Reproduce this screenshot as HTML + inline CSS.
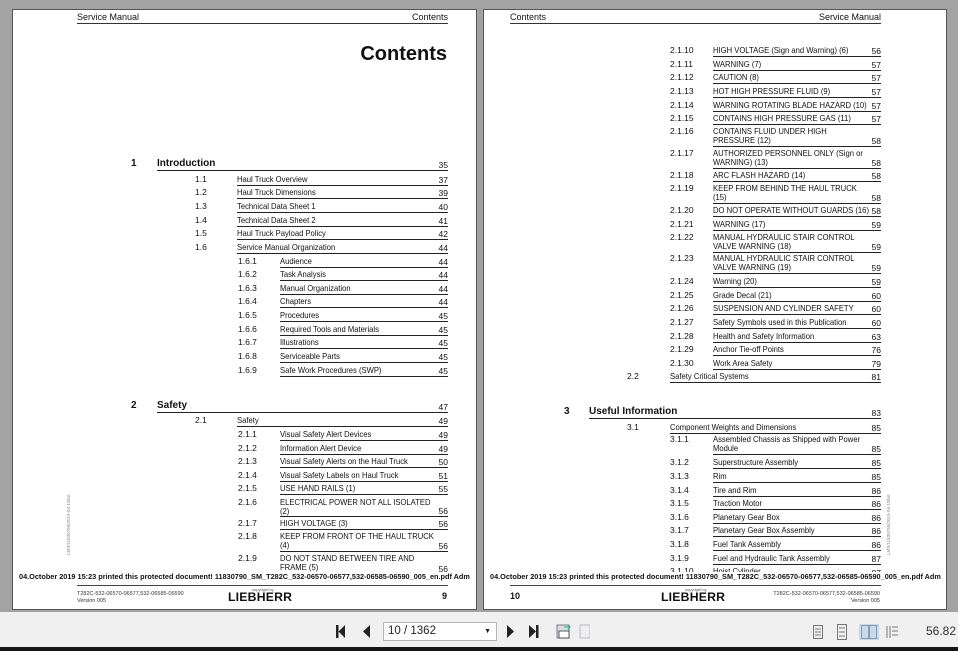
<!DOCTYPE html>
<html><head><meta charset="utf-8"><style>
*{margin:0;padding:0;box-sizing:border-box}
body{width:958px;height:651px;background:#a3a3a3;position:relative;overflow:hidden;font-family:"Liberation Sans",Arial,sans-serif;color:#111}
.pg{position:absolute;background:#fff;border:1px solid #555;top:9px;height:601px}
.a{position:absolute;white-space:nowrap}
.n{position:absolute;font-size:8.5px;line-height:9px;white-space:nowrap}
.e{position:absolute;border-bottom:1.3px solid #222;font-size:8.5px;line-height:9px;white-space:nowrap}
.e i{font-style:normal;display:inline-block;transform:scaleX(.9);transform-origin:left top}
.e b{position:absolute;right:0;bottom:0;font-weight:normal}
.h{position:absolute;border-bottom:1.3px solid #222;height:13px;font-size:10px;font-weight:bold;line-height:12px}
.h b{position:absolute;right:0;bottom:0;font-weight:normal;font-size:8.5px;line-height:9px}
.hn{position:absolute;font-size:10px;font-weight:bold}
.hd{position:absolute;top:12px;font-size:9px;border-bottom:1px solid #333;height:12px;line-height:10px}
.pl{position:absolute;top:572px;font-size:7.5px;font-weight:bold;white-space:nowrap;transform:scaleX(.975);transform-origin:left top;background:#fff}
.logo{position:absolute;font-weight:900;font-size:12px;letter-spacing:.2px;transform:scaleX(1.02);transform-origin:left top}
.cp{position:absolute;font-size:4px;color:#555}
.sm{position:absolute;font-size:5.5px;color:#333;line-height:7px;white-space:nowrap}
.vt{position:absolute;font-size:4.5px;color:#888;transform:rotate(-90deg);transform-origin:left top;white-space:nowrap}
</style></head><body>

<!-- LEFT PAGE -->
<div class="pg" style="left:12px;width:465px"></div>
<div class="hd" style="left:77px;width:371px"><span style="position:absolute;left:0">Service Manual</span><span style="position:absolute;right:0">Contents</span></div>
<div class="a" style="right:511px;top:43px;font-size:20px;font-weight:bold">Contents</div>

<div class="hn" style="left:131px;top:158px">1</div>
<div class="h" style="left:157px;width:291px;top:158px">Introduction<b>35</b></div>
<div class="n" style="left:195px;top:175px">1.1</div><div class="e" style="left:237px;width:211px;top:175px;height:11px"><i>Haul Truck Overview</i><b>37</b></div>
<div class="n" style="left:195px;top:188px">1.2</div><div class="e" style="left:237px;width:211px;top:188px;height:11px"><i>Haul Truck Dimensions</i><b>39</b></div>
<div class="n" style="left:195px;top:202px">1.3</div><div class="e" style="left:237px;width:211px;top:202px;height:11px"><i>Technical Data Sheet 1</i><b>40</b></div>
<div class="n" style="left:195px;top:216px">1.4</div><div class="e" style="left:237px;width:211px;top:216px;height:11px"><i>Technical Data Sheet 2</i><b>41</b></div>
<div class="n" style="left:195px;top:229px">1.5</div><div class="e" style="left:237px;width:211px;top:229px;height:11px"><i>Haul Truck Payload Policy</i><b>42</b></div>
<div class="n" style="left:195px;top:243px">1.6</div><div class="e" style="left:237px;width:211px;top:243px;height:11px"><i>Service Manual Organization</i><b>44</b></div>
<div class="n" style="left:238px;top:257px">1.6.1</div><div class="e" style="left:280px;width:168px;top:257px;height:11px"><i>Audience</i><b>44</b></div>
<div class="n" style="left:238px;top:270px">1.6.2</div><div class="e" style="left:280px;width:168px;top:270px;height:11px"><i>Task Analysis</i><b>44</b></div>
<div class="n" style="left:238px;top:284px">1.6.3</div><div class="e" style="left:280px;width:168px;top:284px;height:11px"><i>Manual Organization</i><b>44</b></div>
<div class="n" style="left:238px;top:297px">1.6.4</div><div class="e" style="left:280px;width:168px;top:297px;height:11px"><i>Chapters</i><b>44</b></div>
<div class="n" style="left:238px;top:311px">1.6.5</div><div class="e" style="left:280px;width:168px;top:311px;height:11px"><i>Procedures</i><b>45</b></div>
<div class="n" style="left:238px;top:325px">1.6.6</div><div class="e" style="left:280px;width:168px;top:325px;height:11px"><i>Required Tools and Materials</i><b>45</b></div>
<div class="n" style="left:238px;top:338px">1.6.7</div><div class="e" style="left:280px;width:168px;top:338px;height:11px"><i>Illustrations</i><b>45</b></div>
<div class="n" style="left:238px;top:352px">1.6.8</div><div class="e" style="left:280px;width:168px;top:352px;height:11px"><i>Serviceable Parts</i><b>45</b></div>
<div class="n" style="left:238px;top:366px">1.6.9</div><div class="e" style="left:280px;width:168px;top:366px;height:11px"><i>Safe Work Procedures (SWP)</i><b>45</b></div>

<div class="hn" style="left:131px;top:400px">2</div>
<div class="h" style="left:157px;width:291px;top:400px">Safety<b>47</b></div>
<div class="n" style="left:195px;top:416px">2.1</div><div class="e" style="left:237px;width:211px;top:416px;height:11px"><i>Safety</i><b>49</b></div>
<div class="n" style="left:238px;top:430px">2.1.1</div><div class="e" style="left:280px;width:168px;top:430px;height:11px"><i>Visual Safety Alert Devices</i><b>49</b></div>
<div class="n" style="left:238px;top:444px">2.1.2</div><div class="e" style="left:280px;width:168px;top:444px;height:11px"><i>Information Alert Device</i><b>49</b></div>
<div class="n" style="left:238px;top:457px">2.1.3</div><div class="e" style="left:280px;width:168px;top:457px;height:11px"><i>Visual Safety Alerts on the Haul Truck</i><b>50</b></div>
<div class="n" style="left:238px;top:471px">2.1.4</div><div class="e" style="left:280px;width:168px;top:471px;height:11px"><i>Visual Safety Labels on Haul Truck</i><b>51</b></div>
<div class="n" style="left:238px;top:484px">2.1.5</div><div class="e" style="left:280px;width:168px;top:484px;height:11px"><i>USE HAND RAILS (1)</i><b>55</b></div>
<div class="n" style="left:238px;top:498px">2.1.6</div><div class="e" style="left:280px;width:168px;top:498px;height:19px"><i>ELECTRICAL POWER NOT ALL ISOLATED<br>(2)</i><b>56</b></div>
<div class="n" style="left:238px;top:519px">2.1.7</div><div class="e" style="left:280px;width:168px;top:519px;height:11px"><i>HIGH VOLTAGE (3)</i><b>56</b></div>
<div class="n" style="left:238px;top:532px">2.1.8</div><div class="e" style="left:280px;width:168px;top:532px;height:20px"><i>KEEP FROM FRONT OF THE HAUL TRUCK<br>(4)</i><b>56</b></div>
<div class="n" style="left:238px;top:554px">2.1.9</div><div class="e" style="left:280px;width:168px;top:554px;height:20px;border-bottom:none"><i>DO NOT STAND BETWEEN TIRE AND<br>FRAME (5)</i><b>56</b></div>

<div class="vt" style="left:66px;top:555px">LMS/11830790/2019-04-10bst</div>
<div class="pl" style="left:19px">04.October 2019 15:23 printed this protected document! 11830790_SM_T282C_532-06570-06577,532-06585-06590_005_en.pdf Adm</div>
<div class="a" style="left:77px;top:585px;width:371px;border-top:1.3px solid #444"></div>
<div class="sm" style="left:77px;top:591px">T282C-532-06570-06577,532-06585-06590<br>Version 005</div>
<div class="cp" style="left:252px;top:587px">copyright by</div>
<div class="logo" style="left:228px;top:590px">LIEBHERR</div>
<div class="a" style="left:442px;top:591px;font-size:9px;font-weight:bold">9</div>

<!-- RIGHT PAGE -->
<div class="pg" style="left:483px;width:464px"></div>
<div class="hd" style="left:510px;width:371px"><span style="position:absolute;left:0">Contents</span><span style="position:absolute;right:0">Service Manual</span></div>

<div class="n" style="left:670px;top:46px">2.1.10</div><div class="e" style="left:713px;width:168px;top:46px;height:11px"><i>HIGH VOLTAGE (Sign and Warning) (6)</i><b>56</b></div>
<div class="n" style="left:670px;top:60px">2.1.11</div><div class="e" style="left:713px;width:168px;top:60px;height:11px"><i>WARNING (7)</i><b>57</b></div>
<div class="n" style="left:670px;top:73px">2.1.12</div><div class="e" style="left:713px;width:168px;top:73px;height:11px"><i>CAUTION (8)</i><b>57</b></div>
<div class="n" style="left:670px;top:87px">2.1.13</div><div class="e" style="left:713px;width:168px;top:87px;height:11px"><i>HOT HIGH PRESSURE FLUID (9)</i><b>57</b></div>
<div class="n" style="left:670px;top:101px">2.1.14</div><div class="e" style="left:713px;width:168px;top:101px;height:11px"><i>WARNING ROTATING BLADE HAZARD (10)</i><b>57</b></div>
<div class="n" style="left:670px;top:114px">2.1.15</div><div class="e" style="left:713px;width:168px;top:114px;height:11px"><i>CONTAINS HIGH PRESSURE GAS (11)</i><b>57</b></div>
<div class="n" style="left:670px;top:127px">2.1.16</div><div class="e" style="left:713px;width:168px;top:127px;height:20px"><i>CONTAINS FLUID UNDER HIGH<br>PRESSURE (12)</i><b>58</b></div>
<div class="n" style="left:670px;top:149px">2.1.17</div><div class="e" style="left:713px;width:168px;top:149px;height:20px"><i>AUTHORIZED PERSONNEL ONLY (Sign or<br>WARNING) (13)</i><b>58</b></div>
<div class="n" style="left:670px;top:171px">2.1.18</div><div class="e" style="left:713px;width:168px;top:171px;height:11px"><i>ARC FLASH HAZARD (14)</i><b>58</b></div>
<div class="n" style="left:670px;top:184px">2.1.19</div><div class="e" style="left:713px;width:168px;top:184px;height:20px"><i>KEEP FROM BEHIND THE HAUL TRUCK<br>(15)</i><b>58</b></div>
<div class="n" style="left:670px;top:206px">2.1.20</div><div class="e" style="left:713px;width:168px;top:206px;height:11px"><i>DO NOT OPERATE WITHOUT GUARDS (16)</i><b>58</b></div>
<div class="n" style="left:670px;top:220px">2.1.21</div><div class="e" style="left:713px;width:168px;top:220px;height:11px"><i>WARNING (17)</i><b>59</b></div>
<div class="n" style="left:670px;top:233px">2.1.22</div><div class="e" style="left:713px;width:168px;top:233px;height:20px"><i>MANUAL HYDRAULIC STAIR CONTROL<br>VALVE WARNING (18)</i><b>59</b></div>
<div class="n" style="left:670px;top:254px">2.1.23</div><div class="e" style="left:713px;width:168px;top:254px;height:20px"><i>MANUAL HYDRAULIC STAIR CONTROL<br>VALVE WARNING (19)</i><b>59</b></div>
<div class="n" style="left:670px;top:277px">2.1.24</div><div class="e" style="left:713px;width:168px;top:277px;height:11px"><i>Warning (20)</i><b>59</b></div>
<div class="n" style="left:670px;top:291px">2.1.25</div><div class="e" style="left:713px;width:168px;top:291px;height:11px"><i>Grade Decal (21)</i><b>60</b></div>
<div class="n" style="left:670px;top:304px">2.1.26</div><div class="e" style="left:713px;width:168px;top:304px;height:11px"><i>SUSPENSION AND CYLINDER SAFETY</i><b>60</b></div>
<div class="n" style="left:670px;top:318px">2.1.27</div><div class="e" style="left:713px;width:168px;top:318px;height:11px"><i>Safety Symbols used in this Publication</i><b>60</b></div>
<div class="n" style="left:670px;top:332px">2.1.28</div><div class="e" style="left:713px;width:168px;top:332px;height:11px"><i>Health and Safety Information</i><b>63</b></div>
<div class="n" style="left:670px;top:345px">2.1.29</div><div class="e" style="left:713px;width:168px;top:345px;height:11px"><i>Anchor Tie-off Points</i><b>76</b></div>
<div class="n" style="left:670px;top:359px">2.1.30</div><div class="e" style="left:713px;width:168px;top:359px;height:11px"><i>Work Area Safety</i><b>79</b></div>
<div class="n" style="left:627px;top:372px">2.2</div><div class="e" style="left:670px;width:211px;top:372px;height:11px"><i>Safety Critical Systems</i><b>81</b></div>

<div class="hn" style="left:564px;top:406px">3</div>
<div class="h" style="left:589px;width:292px;top:406px">Useful Information<b>83</b></div>
<div class="n" style="left:627px;top:423px">3.1</div><div class="e" style="left:670px;width:211px;top:423px;height:11px"><i>Component Weights and Dimensions</i><b>85</b></div>
<div class="n" style="left:670px;top:435px">3.1.1</div><div class="e" style="left:713px;width:168px;top:435px;height:20px"><i>Assembled Chassis as Shipped with Power<br>Module</i><b>85</b></div>
<div class="n" style="left:670px;top:458px">3.1.2</div><div class="e" style="left:713px;width:168px;top:458px;height:11px"><i>Superstructure Assembly</i><b>85</b></div>
<div class="n" style="left:670px;top:472px">3.1.3</div><div class="e" style="left:713px;width:168px;top:472px;height:11px"><i>Rim</i><b>85</b></div>
<div class="n" style="left:670px;top:486px">3.1.4</div><div class="e" style="left:713px;width:168px;top:486px;height:11px"><i>Tire and Rim</i><b>86</b></div>
<div class="n" style="left:670px;top:499px">3.1.5</div><div class="e" style="left:713px;width:168px;top:499px;height:11px"><i>Traction Motor</i><b>86</b></div>
<div class="n" style="left:670px;top:513px">3.1.6</div><div class="e" style="left:713px;width:168px;top:513px;height:11px"><i>Planetary Gear Box</i><b>86</b></div>
<div class="n" style="left:670px;top:526px">3.1.7</div><div class="e" style="left:713px;width:168px;top:526px;height:11px"><i>Planetary Gear Box Assembly</i><b>86</b></div>
<div class="n" style="left:670px;top:540px">3.1.8</div><div class="e" style="left:713px;width:168px;top:540px;height:11px"><i>Fuel Tank Assembly</i><b>86</b></div>
<div class="n" style="left:670px;top:554px">3.1.9</div><div class="e" style="left:713px;width:168px;top:554px;height:11px"><i>Fuel and Hydraulic Tank Assembly</i><b>87</b></div>
<div class="n" style="left:670px;top:567px">3.1.10</div><div class="e" style="left:713px;width:168px;top:567px;height:11px;border-bottom:none"><i>Hoist Cylinder</i><b>87</b></div>

<div class="vt" style="left:886px;top:555px">LMS/11830790/2019-04-10bst</div>
<div class="pl" style="left:490px">04.October 2019 15:23 printed this protected document! 11830790_SM_T282C_532-06570-06577,532-06585-06590_005_en.pdf Adm</div>
<div class="a" style="left:510px;top:585px;width:371px;border-top:1.3px solid #444"></div>
<div class="a" style="left:510px;top:591px;font-size:9px;font-weight:bold">10</div>
<div class="cp" style="left:685px;top:587px">copyright by</div>
<div class="logo" style="left:661px;top:590px">LIEBHERR</div>
<div class="sm" style="left:760px;top:591px;width:120px;text-align:right">T282C-532-06570-06577,532-06585-06590<br>Version 005</div>

<!-- TOOLBAR -->
<div class="a" style="left:0;top:612px;width:958px;height:35px;background:#f0f0f0"></div>
<div class="a" style="left:0;top:647px;width:958px;height:4px;background:#161616"></div>
<svg class="a" style="left:330px;top:622px" width="260" height="20">
 <g fill="#222">
  <rect x="6" y="3" width="2.5" height="13"/><polygon points="15,3 15,16 8.5,9.5"/>
  <polygon points="40,3 40,16 33,9.5"/>
  <polygon points="177,3 177,16 184,9.5"/>
  <polygon points="199,3 199,16 206,9.5"/><rect x="206" y="3" width="2.5" height="13"/>
 </g>
 <rect x="227" y="3" width="12" height="13" fill="#ddd" stroke="#567" stroke-width=".8"/>
 <rect x="229" y="9" width="10" height="7" fill="#fff" stroke="#333" stroke-width=".8"/>
 <path d="M234 5h5M238 3l2 2-2 2" stroke="#2a8" fill="none"/>
 <rect x="250" y="3" width="10" height="13" fill="#eee" stroke="#aab" stroke-width=".8"/>
</svg>
<div class="a" style="left:383px;top:622px;width:114px;height:19px;background:#fff;border:1px solid #b5b5b5;font-size:11.5px;line-height:17px;padding-left:4px;color:#222">10 / 1362<span style="position:absolute;right:5px;top:0;font-size:7px">▼</span></div>
<svg class="a" style="left:810px;top:623px" width="95" height="18">
 <g fill="none" stroke="#777" stroke-width="1">
  <rect x="3.5" y="2.5" width="9" height="13"/><path d="M5 6h6M5 9h6M5 12h6"/>
  <rect x="27.5" y="1.5" width="9" height="15"/><path d="M29 5h6M29 9h6M29 13h6"/>
  <rect x="51.5" y="2.5" width="7" height="13"/><rect x="59.5" y="2.5" width="7" height="13"/>
  <path d="M77 3v12M80 3v12M82 4h6M82 8h6M82 12h6"/>
 </g>
 <rect x="49" y="1" width="20" height="16" fill="#9cc4e8" opacity=".5"/>
</svg>
<div class="a" style="left:926px;top:624px;font-size:12px;color:#333">56.82</div>
</body></html>
